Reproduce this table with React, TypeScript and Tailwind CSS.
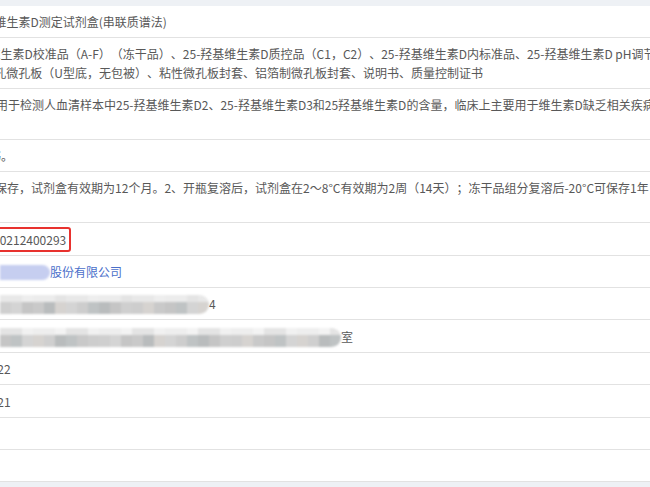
import type { ReactNode } from "react";

type Row = {
  label: string;
  shift: string;
  cell?: string;
  value: ReactNode;
};

// pixelated "privacy" blur, two bands of grey squares
function Mosaic({ top, bottom }: { top: string[]; bottom: string[] }) {
  return (
    <span className="inline-flex h-[19px] translate-y-[1px] flex-col overflow-hidden rounded-r-full align-top blur-[0.8px]">
      <span className="flex h-[7px]">
        {top.map((c, i) => (
          <span key={i} className="h-full w-[11px]" style={{ backgroundColor: c }} />
        ))}
      </span>
      <span className="flex h-[12px]">
        {bottom.map((c, i) => (
          <span key={i} className="h-full w-[11px]" style={{ backgroundColor: c }} />
        ))}
      </span>
    </span>
  );
}

const greys = ["#d4d4d4", "#c9c9c9", "#cfcfcf", "#bfc3c4", "#d6d3d0", "#c5c5c5", "#cdcdcd", "#b9bcbd"];
const lights = ["#eeeeee", "#e8e8e8", "#f1f1f1", "#e4e4e4", "#ececec", "#f3f3f3"];

const pick = (list: string[], n: number, seed: number) =>
  Array.from({ length: n }, (_, i) => list[(i * 5 + seed + ((i * i) % 3)) % list.length]);

const rows: Row[] = [
  { label: "产品名称", shift: "-ml-[47px]", value: "25-羟基维生素D测定试剂盒(串联质谱法)" },
  {
    label: "包装规格及组成",
    shift: "-ml-[19px] indent-[-34px]",
    value: (
      <>
        25-羟基维生素D校准品（A-F）（冻干品）、25-羟基维生素D质控品（C1，C2）、25-羟基维生素D内标准品、25-羟基维生素D pH调节剂、衍生化试剂、
        <br />
        96孔微孔板（U型底，无包被）、粘性微孔板封套、铝箔制微孔板封套、说明书、质量控制证书
      </>
    ),
  },
  {
    label: "预期用途",
    shift: "-ml-[64px] indent-[60px]",
    value: (
      <>
        用于检测人血清样本中25-羟基维生素D2、25-羟基维生素D3和25羟基维生素D的含量，临床上主要用于维生素D缺乏相关疾病的
        <br />
        辅助诊断。
      </>
    ),
  },
  { label: "其他内容", shift: "-ml-[47px]", value: "见说明书。" },
  {
    label: "储存条件及有效期",
    shift: "-ml-[90px] indent-[29px]",
    value: (
      <>
        1、2～8°C保存，试剂盒有效期为12个月。2、开瓶复溶后，试剂盒在2～8°C有效期为2周（14天）；冻干品组分复溶后-20°C可保存1年，
        <br />
        避免反复冻融。
      </>
    ),
  },
  {
    label: "注册证编号",
    shift: "-ml-[60px]",
    cell: "pt-[4px] pb-[3px]",
    value: (
      <span className="inline-block rounded-[3px] border-2 border-[#e8322e] px-[3px] leading-[21px]">
        国械注准20212400293
      </span>
    ),
  },
  {
    label: "注册人名称",
    shift: "ml-0",
    value: (
      <span className="text-[#4b6fca]">
        <span className="inline-block h-[15px] w-[50px] translate-y-[3px] rounded-r-full bg-[#c6cef0] blur-[1.2px]" />
        股份有限公司
      </span>
    ),
  },
  {
    label: "注册人住所",
    shift: "ml-0",
    value: (
      <span>
        <Mosaic top={pick(lights, 19, 1)} bottom={pick(greys, 19, 2)} />
        4
      </span>
    ),
  },
  {
    label: "生产地址",
    shift: "ml-0",
    cell: "pt-[7px] pb-[6px]",
    value: (
      <span>
        <Mosaic top={pick(lights, 31, 3)} bottom={pick(greys, 31, 5)} />
        室
      </span>
    ),
  },
  { label: "批准日期", shift: "-ml-[51px]", value: "2021-09-22" },
  { label: "有效期至", shift: "-ml-[51px]", cell: "pt-[7px] pb-[6px]", value: "2026-09-21" },
  { label: "变更情况", shift: "ml-0", value: "" },
  { label: "备注", shift: "ml-0", value: "" },
];

export default function App() {
  return (
    <div className="h-[487px] w-[650px] overflow-hidden bg-[#eef1f5] pt-[6px] font-['Noto_Sans_CJK_SC',sans-serif] text-[12px] text-[#585858] [text-spacing-trim:space-all]">
      <div className="-ml-[160px] w-[1100px] bg-white">
        {rows.map((row) => (
          <div
            key={row.label}
            className="grid grid-cols-[160px_1fr] border-b border-[#e2e2e2] leading-[19px]"
          >
            <div className="py-[6px] pl-3 text-[#777]">{row.label}</div>
            <div className={`min-h-[31px] whitespace-nowrap ${row.cell ?? "py-[6px]"}`}>
              <div className={row.shift}>{row.value}</div>
            </div>
          </div>
        ))}
      </div>
    </div>
  );
}
